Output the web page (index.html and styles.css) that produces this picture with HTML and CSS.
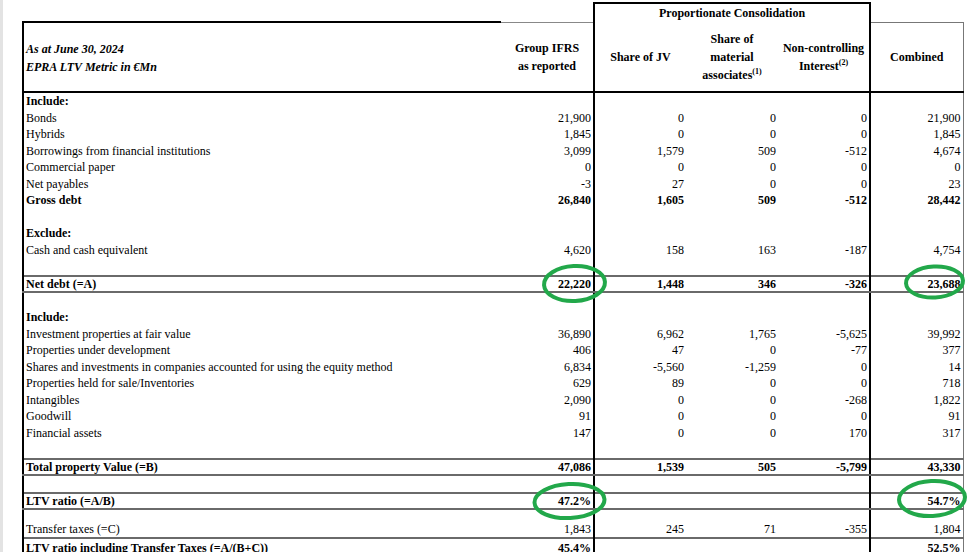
FILE: index.html
```html
<!DOCTYPE html>
<html>
<head>
<meta charset="utf-8">
<link rel="stylesheet" href="styles.css">
</head>
<body>
<div class="page">
<table class="ltv">
  <colgroup>
    <col class="c-label"><col class="c-ifrs"><col class="c-jv"><col class="c-as"><col class="c-nci"><col class="c-comb">
  </colgroup>
  <thead>
    <tr class="top">
      <td class="blank" colspan="2"></td>
      <td class="pc" colspan="3">Proportionate Consolidation</td>
      <td class="blank"></td>
    </tr>
    <tr class="hdr">
      <th class="title">As at June 30, 2024<br>EPRA LTV Metric in €Mn</th>
      <th class="ifrs">Group IFRS<br>as reported</th>
      <th class="jv">Share of JV</th>
      <th>Share of<br>material<br>associates<sup>(1)</sup></th>
      <th class="nci">Non-controlling<br>Interest<sup>(2)</sup></th>
      <th class="comb">Combined</th>
    </tr>
  </thead>
  <tbody>
    <tr class="b"><td>Include:</td><td></td><td></td><td></td><td></td><td></td></tr>
    <tr><td>Bonds</td><td>21,900</td><td>0</td><td>0</td><td>0</td><td>21,900</td></tr>
    <tr><td>Hybrids</td><td>1,845</td><td>0</td><td>0</td><td>0</td><td>1,845</td></tr>
    <tr><td>Borrowings from financial institutions</td><td>3,099</td><td>1,579</td><td>509</td><td>-512</td><td>4,674</td></tr>
    <tr><td>Commercial paper</td><td>0</td><td>0</td><td>0</td><td>0</td><td>0</td></tr>
    <tr><td>Net payables</td><td>-3</td><td>27</td><td>0</td><td>0</td><td>23</td></tr>
    <tr class="b"><td>Gross debt</td><td>26,840</td><td>1,605</td><td>509</td><td>-512</td><td>28,442</td></tr>
    <tr><td></td><td></td><td></td><td></td><td></td><td></td></tr>
    <tr class="b"><td>Exclude:</td><td></td><td></td><td></td><td></td><td></td></tr>
    <tr><td>Cash and cash equivalent</td><td>4,620</td><td>158</td><td>163</td><td>-187</td><td>4,754</td></tr>
    <tr><td></td><td></td><td></td><td></td><td></td><td></td></tr>
    <tr class="b dbl"><td>Net debt (=A)</td><td>22,220</td><td>1,448</td><td>346</td><td>-326</td><td>23,688</td></tr>
    <tr><td></td><td></td><td></td><td></td><td></td><td></td></tr>
    <tr class="b"><td>Include:</td><td></td><td></td><td></td><td></td><td></td></tr>
    <tr><td>Investment properties at fair value</td><td>36,890</td><td>6,962</td><td>1,765</td><td>-5,625</td><td>39,992</td></tr>
    <tr><td>Properties under development</td><td>406</td><td>47</td><td>0</td><td>-77</td><td>377</td></tr>
    <tr><td>Shares and investments in companies accounted for using the equity method</td><td>6,834</td><td>-5,560</td><td>-1,259</td><td>0</td><td>14</td></tr>
    <tr><td>Properties held for sale/Inventories</td><td>629</td><td>89</td><td>0</td><td>0</td><td>718</td></tr>
    <tr><td>Intangibles</td><td>2,090</td><td>0</td><td>0</td><td>-268</td><td>1,822</td></tr>
    <tr><td>Goodwill</td><td>91</td><td>0</td><td>0</td><td>0</td><td>91</td></tr>
    <tr><td>Financial assets</td><td>147</td><td>0</td><td>0</td><td>170</td><td>317</td></tr>
    <tr><td></td><td></td><td></td><td></td><td></td><td></td></tr>
    <tr class="b dbl"><td>Total property Value (=B)</td><td>47,086</td><td>1,539</td><td>505</td><td>-5,799</td><td>43,330</td></tr>
    <tr><td></td><td></td><td></td><td></td><td></td><td></td></tr>
    <tr class="b dbl"><td>LTV ratio (=A/B)</td><td>47.2%</td><td></td><td></td><td></td><td>54.7%</td></tr>
    <tr class="tall"><td>Transfer taxes (=C)</td><td>1,843</td><td>245</td><td>71</td><td>-355</td><td>1,804</td></tr>
    <tr class="b last"><td>LTV ratio including Transfer Taxes (=A/(B+C))</td><td>45.4%</td><td></td><td></td><td></td><td>52.5%</td></tr>
  </tbody>
</table>
<svg class="marks" width="968" height="552" viewBox="0 0 968 552" aria-hidden="true">
  <ellipse cx="574.5" cy="283.5" rx="30.5" ry="17.5" transform="rotate(-3 574.5 283.5)"/>
  <ellipse cx="934.5" cy="282" rx="28.5" ry="15.5" transform="rotate(-3 934.5 282)"/>
  <ellipse cx="569.5" cy="501" rx="35" ry="17" transform="rotate(-3 569.5 501)"/>
  <ellipse cx="932" cy="498.5" rx="33" ry="17.5" transform="rotate(-3 932 498.5)"/>
</svg>
</div>
</body>
</html>
```
FILE: styles.css
```css
html, body {
  margin: 0;
  padding: 0;
}
body {
  background: linear-gradient(to right, #e3e3e3 0, #e3e3e3 3px, #ffffff 3px);
  font-family: "Liberation Serif", "Times New Roman", serif;
  font-size: 12px;
  color: #000;
}
.page {
  position: relative;
  width: 968px;
  height: 552px;
  overflow: hidden;
  padding: 2px 0 0 22px;
  box-sizing: border-box;
}
.ltv {
  border-collapse: collapse;
  table-layout: fixed;
  width: 940px;
}
.c-label { width: 478px; }
.c-ifrs { width: 93px; }
.c-jv { width: 92px; }
.c-as { width: 92px; }
.c-nci { width: 92px; }
.c-comb { width: 93px; }

.top td {
  height: 18px;
  padding: 0;
}
.top .pc {
  border-top: 2px solid #000;
  border-left: 2px solid #000;
  border-right: 2px solid #000;
  text-align: center;
  font-weight: bold;
  line-height: 16px;
  vertical-align: middle;
}
.hdr th {
  height: 67px;
  padding: 1px 2px 0;
  font-weight: bold;
  line-height: 18px;
  vertical-align: middle;
  text-align: center;
  border-bottom: 2px solid #000;
}
.hdr .title {
  text-align: left;
  font-style: italic;
  border-top: 2px solid #000;
  border-left: 2px solid #000;
  padding-left: 2px;
}
.hdr .ifrs {
  border-top: 1px solid #888;
}
.hdr .jv {
  border-left: 2px solid #000;
}
.hdr .nci {
  border-right: 2px solid #000;
}
.hdr .comb {
  border-top: 1px solid #777;
  border-right: 1px solid #777;
}
sup {
  font-size: 8px;
  line-height: 0;
  vertical-align: 5px;
}

tbody td {
  height: 16.5px;
  padding: 0 2px;
  line-height: 14px;
  white-space: nowrap;
  text-align: right;
  vertical-align: middle;
}
tbody td:first-child {
  text-align: left;
  border-left: 2px solid #000;
}
tbody td:nth-child(3) {
  border-left: 2px solid #000;
}
tbody td:nth-child(5) {
  border-right: 2px solid #000;
}
tbody td:nth-child(6) {
  border-right: 1px solid #777;
}
tbody tr.b td {
  font-weight: bold;
}
tbody tr.dbl td {
  height: 14px;
  border-top: 2px solid #6a6a6a;
  border-bottom: 2px solid #6a6a6a;
}
tbody tr.tall td {
  height: 26px;
  vertical-align: bottom;
  padding-bottom: 1px;
}
tbody tr.last td {
  border-top: 2px solid #6a6a6a;
  height: 18px;
}

.marks {
  position: absolute;
  left: 0;
  top: 0;
  pointer-events: none;
}
.marks ellipse {
  fill: none;
  stroke: #22a84a;
  stroke-width: 4;
}
```
